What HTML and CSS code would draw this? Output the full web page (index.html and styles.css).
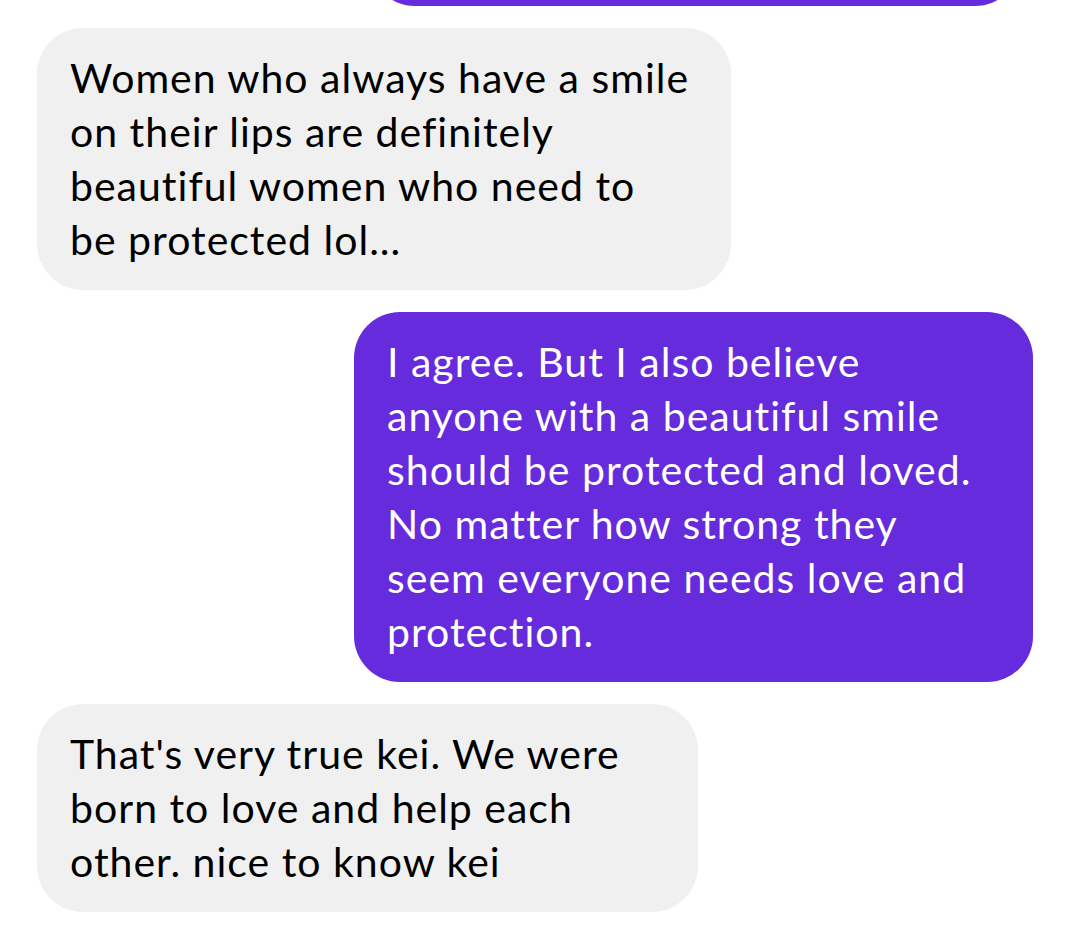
FILE: index.html
```html
<!DOCTYPE html>
<html lang="en">
<head>
<meta charset="utf-8">
<title>Chat</title>
<link rel="stylesheet" href="styles.css">
</head>
<body>
<div class="chat">
  <div class="row row-out row-clipped">
    <div class="bubble bubble-out bubble-top"></div>
  </div>
  <div class="row row-in">
    <p class="bubble bubble-in bubble-a">Women who always have a smile<br>on their lips are definitely<br>beautiful women who need to<br>be protected lol...</p>
  </div>
  <div class="row row-out">
    <p class="bubble bubble-out bubble-b">I agree. But I also believe<br>anyone with a beautiful smile<br>should be protected and loved.<br>No matter how strong they<br>seem everyone needs love and<br>protection.</p>
  </div>
  <div class="row row-in">
    <p class="bubble bubble-in bubble-c">That's very true kei. We were<br>born to love and help each<br>other. nice to know kei</p>
  </div>
</div>
</body>
</html>
```

FILE: styles.css
```css
html, body {
  margin: 0;
  padding: 0;
  background: #ffffff;
}

body {
  width: 1075px;
  height: 931px;
  overflow: hidden;
  font-family: "Lato", "Noto Sans", sans-serif;
}

.chat {
  display: flex;
  flex-direction: column;
  gap: 22px;
  padding: 0 42px 0 37px;
}

.row {
  display: flex;
}

.row-in {
  justify-content: flex-start;
}

.row-out {
  justify-content: flex-end;
}

.row-clipped {
  margin-top: -94px;
  padding-right: 12px;
}

.bubble {
  margin: 0;
  border-radius: 46px;
  padding: 23px 0 23px 33px;
  font-size: 41px;
  line-height: 54px;
  letter-spacing: 1px;
  white-space: nowrap;
  box-sizing: border-box;
}

.bubble-in {
  background: #f0f0f0;
  color: #000000;
}

.bubble-out {
  background: #652bdc;
  color: #ffffff;
}

.bubble-top {
  width: 652px;
  height: 100px;
  padding: 0;
}

.bubble-a {
  width: 694px;
}

.bubble-b {
  width: 679px;
}

.bubble-c {
  width: 661px;
}
```
